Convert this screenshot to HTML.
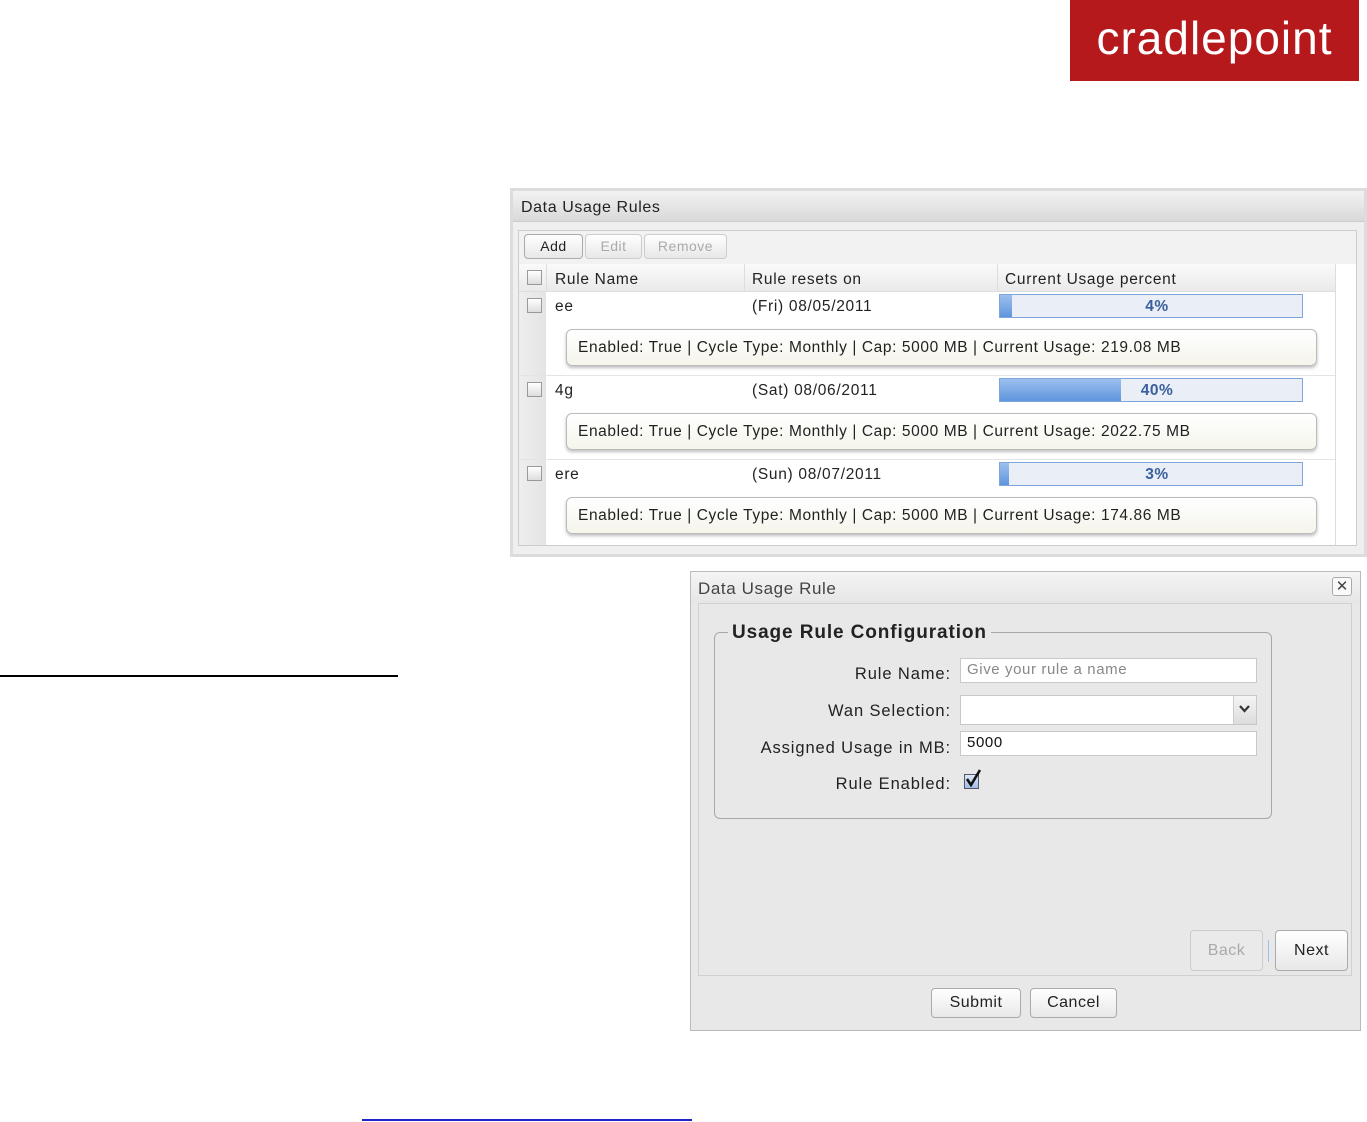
<!DOCTYPE html>
<html><head><meta charset="utf-8">
<style>
*{box-sizing:border-box;margin:0;padding:0}
body{width:1367px;height:1122px;background:#fff;position:relative;overflow:hidden;font-family:"Liberation Sans",sans-serif;color:#222}
.a{position:absolute}
.btn{position:absolute;border:1px solid #aaa;border-radius:4px;background:linear-gradient(#fff,#e8e8e8);font-size:14px;text-align:center;color:#222;letter-spacing:.5px}
.cb{position:absolute;width:15px;height:15px;border:1px solid #999;background:linear-gradient(#fff,#ddd)}
.t{position:absolute;font-size:15.5px;white-space:nowrap;letter-spacing:.7px}
.bar{position:absolute;left:999px;width:304px;height:24px;border:1px solid #7ea6dc;background:#e9eef7}
.bar .f{position:absolute;left:0;top:0;bottom:0;background:linear-gradient(#9cc0ee,#5e95dc)}
.bar span{position:absolute;left:12px;right:0;top:3px;text-align:center;font-weight:bold;font-size:15.5px;color:#3a5f9c;letter-spacing:.5px}
.tip{position:absolute;left:566px;width:751px;height:37px;border:1px solid #bbb;border-radius:6px;background:linear-gradient(#fff,#f5f5ec);box-shadow:0 2px 3px rgba(0,0,0,.25);font-size:15.5px;padding:9px 0 0 11px;white-space:nowrap;letter-spacing:.6px}
.lbl{position:absolute;font-size:16.5px;text-align:right;right:416px;white-space:nowrap;letter-spacing:.9px}
.inp{position:absolute;left:960px;width:297px;background:#fff;border:1px solid #c8c8c8;font-size:15px;padding:2px 6px;letter-spacing:.6px}
</style></head><body>
<div class="a" style="left:1070px;top:0;width:289px;height:81px;background:#b5191c;color:#fff;font-size:46px;line-height:76px;text-align:center;letter-spacing:1px">cradlepoint</div>

<div class="a" style="left:510px;top:188px;width:857px;height:369px;background:#dcdcdc"></div>
<div class="a" style="left:513px;top:191px;width:851px;height:363px;background:#efefef"></div>
<div class="a" style="left:513px;top:191px;width:851px;height:31px;background:linear-gradient(#f2f2f2,#d9d9d9);border-bottom:1px solid #ccc"></div>
<div class="t" style="left:521px;top:199px;font-size:16px;color:#222;letter-spacing:.6px">Data Usage Rules</div>
<div class="a" style="left:518px;top:230px;width:839px;height:316px;background:#fff;border:1px solid #ccc"></div>
<div class="a" style="left:519px;top:231px;width:837px;height:33px;background:#f2f2f2"></div>
<div class="btn" style="left:524px;top:234px;width:59px;height:25px;line-height:23px">Add</div>
<div class="btn" style="left:585px;top:234px;width:57px;height:25px;line-height:23px;color:#aaa;border-color:#ccc">Edit</div>
<div class="btn" style="left:644px;top:234px;width:83px;height:25px;line-height:23px;color:#aaa;border-color:#ccc">Remove</div>
<div class="a" style="left:519px;top:264px;width:816px;height:28px;background:linear-gradient(#fafafa,#eaeaea);border-bottom:1px solid #ddd"></div>
<div class="a" style="left:546px;top:264px;width:1px;height:28px;background:#ddd"></div>
<div class="a" style="left:744px;top:264px;width:1px;height:28px;background:#ddd"></div>
<div class="a" style="left:997px;top:264px;width:1px;height:28px;background:#ddd"></div>
<div class="a" style="left:1335px;top:264px;width:1px;height:281px;background:#ddd"></div>
<div class="cb" style="left:527px;top:270px"></div>
<div class="t" style="left:555px;top:271px">Rule Name</div>
<div class="t" style="left:752px;top:271px">Rule resets on</div>
<div class="t" style="left:1005px;top:271px">Current Usage percent</div>
<div class="a" style="left:519px;top:292px;width:27px;height:253px;background:linear-gradient(90deg,#eee,#e4e4e4)"></div>
<div class="a" style="left:519px;top:375px;width:816px;height:1px;background:#e4e4e4"></div>
<div class="a" style="left:519px;top:459px;width:816px;height:1px;background:#e4e4e4"></div>

<div class="cb" style="left:527px;top:298px"></div>
<div class="t" style="left:555px;top:298px">ee</div>
<div class="t" style="left:752px;top:298px">(Fri) 08/05/2011</div>
<div class="bar" style="top:294px"><div class="f" style="width:12px"></div><span>4%</span></div>
<div class="tip" style="top:329px">Enabled: True | Cycle Type: Monthly | Cap: 5000 MB | Current Usage: 219.08 MB</div>

<div class="cb" style="left:527px;top:382px"></div>
<div class="t" style="left:555px;top:382px">4g</div>
<div class="t" style="left:752px;top:382px">(Sat) 08/06/2011</div>
<div class="bar" style="top:378px"><div class="f" style="width:121px"></div><span>40%</span></div>
<div class="tip" style="top:413px">Enabled: True | Cycle Type: Monthly | Cap: 5000 MB | Current Usage: 2022.75 MB</div>

<div class="cb" style="left:527px;top:466px"></div>
<div class="t" style="left:555px;top:466px">ere</div>
<div class="t" style="left:752px;top:466px">(Sun) 08/07/2011</div>
<div class="bar" style="top:462px"><div class="f" style="width:9px"></div><span>3%</span></div>
<div class="tip" style="top:497px">Enabled: True | Cycle Type: Monthly | Cap: 5000 MB | Current Usage: 174.86 MB</div>

<div class="a" style="left:0;top:675px;width:398px;height:2px;background:#000"></div>
<div class="a" style="left:362px;top:1119px;width:330px;height:2px;background:#2222cc"></div>

<div class="a" style="left:690px;top:571px;width:671px;height:460px;background:#e8e8e8;border:1px solid #bbb"></div>
<div class="a" style="left:691px;top:572px;width:669px;height:31px;background:linear-gradient(#f4f4f4,#e6e6e6)"></div>
<div class="t" style="left:698px;top:579px;font-size:17px;color:#444;letter-spacing:.6px">Data Usage Rule</div>
<div class="a" style="left:1332px;top:577px;width:20px;height:19px;border:1px solid #aaa;border-radius:3px;background:#fafafa;font-size:15px;line-height:17px;text-align:center;color:#444">✕</div>
<div class="a" style="left:698px;top:603px;width:654px;height:373px;border:1px solid #d0d0d0;background:#e8e8e8"></div>
<div class="a" style="left:714px;top:632px;width:558px;height:187px;border:1px solid #a8a8a8;border-radius:6px"></div>
<div class="t" style="left:728px;top:622px;font-size:19px;font-weight:bold;background:#e8e8e8;padding:0 4px;color:#222;letter-spacing:.9px">Usage Rule Configuration</div>
<div class="lbl" style="top:665px">Rule Name:</div>
<div class="inp" style="top:658px;height:25px;color:#888">Give your rule a name</div>
<div class="lbl" style="top:702px">Wan Selection:</div>
<div class="inp" style="top:695px;height:30px"></div>
<div class="a" style="left:1233px;top:696px;width:23px;height:28px;background:linear-gradient(#f4f4f4,#ddd);border-left:1px solid #ccc"></div>
<svg class="a" style="left:1238px;top:704px" width="13" height="10" viewBox="0 0 13 10"><path d="M2 2 L6.5 7 L11 2" stroke="#333" stroke-width="2.2" fill="none"/></svg>
<div class="lbl" style="top:739px">Assigned Usage in MB:</div>
<div class="inp" style="top:731px;height:25px;color:#111">5000</div>
<div class="lbl" style="top:775px">Rule Enabled:</div>
<div class="a" style="left:964px;top:774px;width:15px;height:15px;border:1px solid #556;background:linear-gradient(#dde8f8,#9fbde6)"></div>
<svg class="a" style="left:963px;top:768px" width="20" height="20" viewBox="0 0 20 20"><path d="M4 11 L8 17 L17 2" stroke="#111" stroke-width="2.6" fill="none"/></svg>

<div class="btn" style="left:1190px;top:930px;width:73px;height:41px;line-height:39px;font-size:16px;color:#aaa;border-color:#ccc;background:#eaeaea">Back</div>
<div class="a" style="left:1268px;top:940px;width:1px;height:22px;background:#9ec0f0"></div>
<div class="btn" style="left:1275px;top:930px;width:73px;height:41px;line-height:39px;font-size:16px">Next</div>
<div class="btn" style="left:931px;top:988px;width:90px;height:30px;line-height:28px;font-size:16px">Submit</div>
<div class="btn" style="left:1030px;top:988px;width:87px;height:30px;line-height:28px;font-size:16px">Cancel</div>
</body></html>
